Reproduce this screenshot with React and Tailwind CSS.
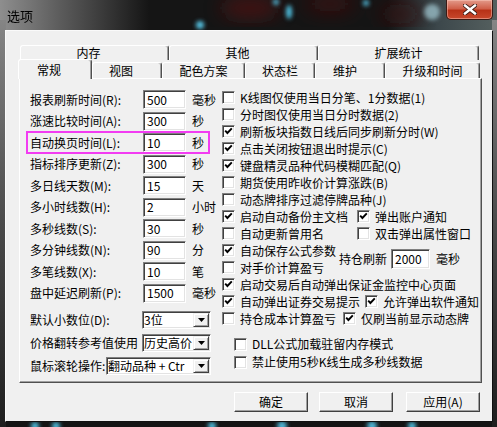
import React from "react";

const leftRows = [
  ["报表刷新时间(R):", "500", "毫秒"],
  ["涨速比较时间(A):", "300", "秒"],
  ["自动换页时间(L):", "10", "秒"],
  ["指标排序更新(Z):", "300", "秒"],
  ["多日线天数(M):", "15", "天"],
  ["多小时线数(H):", "2", "小时"],
  ["多秒线数(S):", "30", "秒"],
  ["多分钟线数(N):", "90", "分"],
  ["多笔线数(X):", "10", "笔"],
  ["盘中延迟刷新(P):", "1500", "毫秒"],
];

const topChecks = [
  [false, "K线图仅使用当日分笔、1分数据(1)"],
  [false, "分时图仅使用当日分时数据(2)"],
  [true, "刷新板块指数日线后同步刷新分时(W)"],
  [true, "点击关闭按钮退出时提示(C)"],
  [true, "键盘精灵品种代码模糊匹配(Q)"],
  [false, "期货使用昨收价计算涨跌(B)"],
  [false, "动态牌排序过滤停牌品种(J)"],
];

function Backdrop() {
  return (
    <svg className="absolute inset-0" width="497" height="427">
      <defs>
        <linearGradient id="top" x1="0" x2="1" y1="0" y2="0">
          <stop offset="0" stopColor="#8e8e8e" />
          <stop offset="0.12" stopColor="#5c5c5c" />
          <stop offset="0.3" stopColor="#151515" />
          <stop offset="0.78" stopColor="#151515" />
          <stop offset="0.88" stopColor="#3c474b" />
          <stop offset="1" stopColor="#55605f" />
        </linearGradient>
        <linearGradient id="side" x1="0" x2="0" y1="0" y2="1">
          <stop offset="0" stopColor="#858585" />
          <stop offset="0.5" stopColor="#4a4a4a" />
          <stop offset="1" stopColor="#1e1e1e" />
        </linearGradient>
        <filter id="b1">
          <feGaussianBlur stdDeviation="2" />
        </filter>
        <filter id="b2">
          <feGaussianBlur stdDeviation="9" />
        </filter>
      </defs>
      <rect width="497" height="427" fill="#141414" />
      <rect width="497" height="34" fill="url(#top)" />
      <rect x="0" y="20" width="6" height="407" fill="url(#side)" />
      <rect x="492" y="20" width="5" height="407" fill="url(#side)" />
      <g filter="url(#b2)" opacity="0.7">
        <ellipse cx="250" cy="8" rx="30" ry="10" fill="#5a1414" />
        <ellipse cx="330" cy="4" rx="25" ry="8" fill="#4a1010" />
        <ellipse cx="400" cy="14" rx="20" ry="10" fill="#3a1010" />
      </g>
      <g filter="url(#b1)">
        <circle cx="200" cy="25" r="4" fill="#56c4e4" />
        <ellipse cx="289" cy="12" rx="3" ry="7" fill="#4fc0e0" />
        <circle cx="276" cy="2" r="3" fill="#4fb6d6" />
        <circle cx="366" cy="3" r="3" fill="#4fb6d6" />
        <circle cx="432" cy="12" r="8" fill="#a6cfd8" opacity="0.7" />
        <circle cx="35" cy="426" r="4" fill="#4fc0e0" />
        <circle cx="56" cy="426" r="4" fill="#4fc0e0" />
        <circle cx="212" cy="426" r="4" fill="#4fc0e0" />
        <circle cx="282" cy="426" r="5" fill="#4fb6d6" />
        <circle cx="372" cy="426" r="5" fill="#4fb6d6" />
        <circle cx="412" cy="426" r="4" fill="#4fc0e0" />
      </g>
    </svg>
  );
}

function CloseButton() {
  return (
    <div className="ml-auto mr-[4px] flex h-[20px] w-[47px] items-center justify-center rounded-b-[5px] border border-t-0 border-[#3a1a14] bg-[linear-gradient(#e39a8a,#d0604a_45%,#b83218_55%,#c8482c)] shadow-[inset_0_0_0_1px_rgba(255,210,200,0.45)]">
      <svg width="14" height="11" viewBox="0 0 14 11">
        <path d="M2 1.5 L12 9.5 M12 1.5 L2 9.5" stroke="#3a1a14" strokeWidth="4.2" strokeLinecap="square" />
        <path d="M2 1.5 L12 9.5 M12 1.5 L2 9.5" stroke="#ffffff" strokeWidth="2.4" strokeLinecap="square" />
      </svg>
    </div>
  );
}

function Check({ on }) {
  return (
    <span className="flex h-[13px] w-[13px] shrink-0 items-center justify-center border border-t-[#808080] border-l-[#808080] border-b-white border-r-white bg-white shadow-[inset_1px_1px_0_#404040,inset_-1px_-1px_0_#e3e3e3]">
      {on && (
        <svg width="9" height="9" viewBox="0 0 9 9">
          <path d="M1.2 3.6 L3.4 6 L7.8 1.4" stroke="#000" strokeWidth="1.9" fill="none" />
        </svg>
      )}
    </span>
  );
}

function CheckItem({ on, label, className = "" }) {
  return (
    <div className={`flex items-center gap-[5px] whitespace-nowrap ${className}`}>
      <Check on={on} />
      <span>{label}</span>
    </div>
  );
}

function Edit({ value, className = "" }) {
  return (
    <div
      className={`flex items-center border border-t-[#808080] border-l-[#808080] border-b-white border-r-white bg-white pl-[3px] shadow-[inset_1px_1px_0_#404040,inset_-1px_-1px_0_#e3e3e3] ${className}`}
    >
      {value}
    </div>
  );
}

function Combo({ value, className = "" }) {
  return (
    <div
      className={`flex h-[18px] items-center border border-t-[#808080] border-l-[#808080] border-b-white border-r-white bg-white shadow-[inset_1px_1px_0_#404040,inset_-1px_-1px_0_#e3e3e3] ${className}`}
    >
      <span className="min-w-0 flex-1 whitespace-nowrap pl-[1px] text-[12px] leading-[16px]">
        {value}
      </span>
      <span className="mr-[1px] flex h-[14px] w-[16px] shrink-0 items-center justify-center border border-t-[#f0f0f0] border-l-[#f0f0f0] border-b-[#404040] border-r-[#404040] bg-[#f0f0f0] shadow-[inset_1px_1px_0_#fff,inset_-1px_-1px_0_#a0a0a0]">
        <svg width="7" height="4" viewBox="0 0 7 4">
          <path d="M0 0 H7 L3.5 4 Z" fill="#000" />
        </svg>
      </span>
    </div>
  );
}

function Btn({ children, className = "" }) {
  return (
    <div
      className={`flex h-[20px] w-[74px] items-center justify-center border border-t-white border-l-white border-b-[#404040] border-r-[#404040] bg-[#f0f0f0] shadow-[inset_-1px_-1px_0_#a0a0a0] ${className}`}
    >
      {children}
    </div>
  );
}

const tabCls =
  "flex items-center justify-center rounded-t-[3px] border-t border-l border-r border-t-white border-l-white border-r-[#505050] bg-[#f0f0f0] shadow-[inset_-1px_0_0_#a0a0a0]";

export default function App() {
  return (
    <div className="relative h-[427px] w-[497px] overflow-hidden font-['Noto_Sans_CJK_SC','Noto_Sans',sans-serif] text-[12px] leading-[14px] text-black">
      <Backdrop />
      <div className="relative flex h-full flex-col">
        {/* Title bar */}
        <div className="flex h-[30px] items-start">
          <span className="ml-[7px] mt-[8px] text-[13px] leading-[15px]">选项</span>
          <CloseButton />
        </div>

        {/* Client area */}
        <div className="ml-[5px] flex h-[392px] w-[488px] flex-col border border-t-[#fafafa] border-l-[#fafafa] border-b-[#101010] border-r-[#101010] bg-[#f0f0f0] pl-[13px] pt-[14px]">
          {/* Tab row 1 */}
          <div className="flex h-[15px] w-[463px] pl-[1px]">
            <div className={`${tabCls} w-[149px] pr-[12px]`}>内存</div>
            <div className={`${tabCls} w-[149px] pr-[12px]`}>其他</div>
            <div className={`${tabCls} w-[161px]`}>扩展统计</div>
          </div>
          {/* Tab row 2 */}
          <div className="flex h-[18px] w-[463px] items-end">
            <div className={`${tabCls} relative z-10 -mb-[1px] -ml-[1px] h-[20px] w-[74px] pr-[12px]`}>常规</div>
            <div className={`${tabCls} h-[16px] w-[70px] pr-[12px]`}>视图</div>
            <div className={`${tabCls} h-[16px] w-[83px]`}>配色方案</div>
            <div className={`${tabCls} h-[16px] w-[70px]`}>状态栏</div>
            <div className={`${tabCls} h-[16px] w-[70px] pr-[10px]`}>维护</div>
            <div className={`${tabCls} h-[16px] w-[95px]`}>升级和时间</div>
          </div>

          {/* Tab panel */}
          <div className="relative flex h-[305px] w-[463px] border border-t-white border-l-white border-b-[#505050] border-r-[#505050] pl-[10px] pt-[10px] shadow-[inset_-1px_-1px_0_#a0a0a0]">
            {/* Left column */}
            <div className="flex w-[192px] shrink-0 flex-col">
              {leftRows.map(([label, value, unit]) => (
                <div key={label} className="flex h-[21.5px] items-center">
                  <span className="w-[113px] whitespace-nowrap">{label}</span>
                  <Edit value={value} className="h-[19px] w-[43px]" />
                  <span className="ml-[6px]">{unit}</span>
                </div>
              ))}
              <div className="mt-[4px] flex h-[23px] items-center">
                <span className="w-[112px] whitespace-nowrap">默认小数位(D):</span>
                <Combo value="3位" className="w-[69px]" />
              </div>
              <div className="flex h-[23px] items-center">
                <span className="w-[112px] whitespace-nowrap">价格翻转参考值使用</span>
                <Combo value="历史高价" className="w-[69px]" />
              </div>
              <div className="flex h-[23px] items-center">
                <span className="w-[76px] whitespace-nowrap">鼠标滚轮操作:</span>
                <Combo value="翻动品种 + Ctr" className="w-[105px]" />
              </div>
            </div>

            {/* Right column */}
            <div className="flex flex-col">
              {topChecks.map(([on, label]) => (
                <div key={label} className="flex h-[17px] items-center">
                  <CheckItem on={on} label={label} />
                </div>
              ))}
              <div className="flex h-[17px] items-center">
                <CheckItem on label="启动自动备份主文档" className="w-[135px]" />
                <CheckItem on label="弹出账户通知" />
              </div>
              <div className="flex h-[17px] items-center">
                <CheckItem on={false} label="自动更新曾用名" className="w-[135px]" />
                <CheckItem on={false} label="双击弹出属性窗口" />
              </div>
              <div className="flex h-[34px] items-center">
                <div className="flex w-[117px] flex-col">
                  <div className="flex h-[17px] items-center">
                    <CheckItem on label="自动保存公式参数" />
                  </div>
                  <div className="flex h-[17px] items-center">
                    <CheckItem on={false} label="对手价计算盈亏" />
                  </div>
                </div>
                <span className="whitespace-nowrap">持仓刷新</span>
                <Edit value="2000" className="ml-[4px] h-[20px] w-[39px]" />
                <span className="ml-[6px]">毫秒</span>
              </div>
              <div className="flex h-[17px] items-center">
                <CheckItem on label="启动交易后自动弹出保证金监控中心页面" />
              </div>
              <div className="flex h-[17px] items-center">
                <CheckItem on label="自动弹出证券交易提示" className="w-[143px]" />
                <CheckItem on label="允许弹出软件通知" />
              </div>
              <div className="flex h-[17px] items-center">
                <CheckItem on={false} label="持仓成本计算盈亏" className="w-[121px]" />
                <CheckItem on label="仅刷当前显示动态牌" />
              </div>
              <div className="mt-[8px] flex h-[18px] items-center pl-[12px]">
                <CheckItem on={false} label="DLL公式加载驻留内存模式" />
              </div>
              <div className="flex h-[18px] items-center pl-[12px]">
                <CheckItem on={false} label="禁止使用5秒K线生成多秒线数据" />
              </div>
            </div>

            {/* Highlight annotation */}
            <div className="pointer-events-none absolute left-[6px] top-[52px] h-[23px] w-[184px] border-2 border-[#f23cf2]" />
          </div>

          {/* Buttons */}
          <div className="mt-[9px] flex w-[463px] justify-end pr-[2px]">
            <Btn>确定</Btn>
            <Btn className="ml-[11px]">取消</Btn>
            <Btn className="ml-[13px]">应用(A)</Btn>
          </div>
        </div>
      </div>
    </div>
  );
}
